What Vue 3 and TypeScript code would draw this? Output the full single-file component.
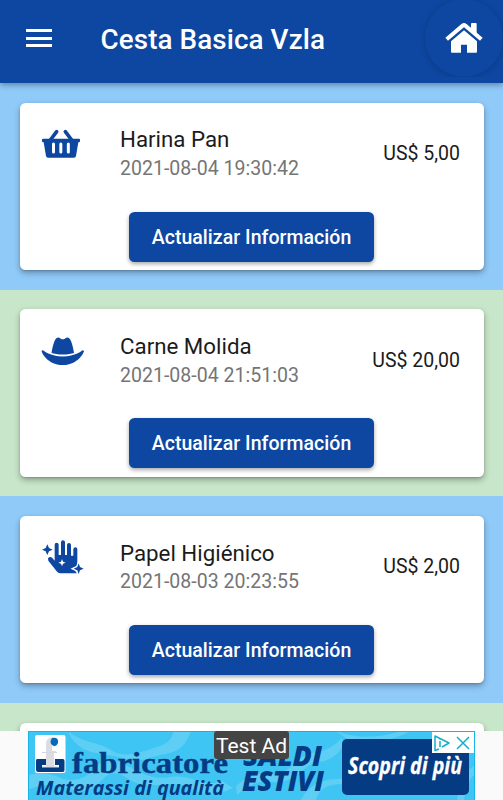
<script setup lang="ts">
interface Product {
  name: string
  date: string
  price: string
  icon: 'basket' | 'hat' | 'hand'
}

const products: Product[] = [
  { name: 'Harina Pan', date: '2021-08-04 19:30:42', price: 'US$ 5,00', icon: 'basket' },
  { name: 'Carne Molida', date: '2021-08-04 21:51:03', price: 'US$ 20,00', icon: 'hat' },
  { name: 'Papel Higiénico', date: '2021-08-03 20:23:55', price: 'US$ 2,00', icon: 'hand' },
]
</script>

<template>
  <div class="app">
    <header class="bar">
      <button class="menu" aria-label="Menu"><i></i><i></i><i></i></button>
      <h1>Cesta Basica Vzla</h1>
      <div class="home-clip">
        <button class="home" aria-label="Inicio">
          <svg viewBox="0 0 114 90" width="38" height="30">
            <path d="M78 3Q78 0 81 0H92Q95 0 95 3V38L78 24Z" fill="#fff" />
            <path d="M5 49L53 8Q57 5 61 8L109 49" fill="none" stroke="#fff" stroke-width="12" />
            <path d="M57 22L96 55V86Q96 89 93 89H66V65H48V89H21Q18 89 18 86V55Z" fill="#fff" />
          </svg>
        </button>
      </div>
    </header>

    <main class="list">
      <section v-for="p in products" :key="p.name" class="row">
        <article class="card">
          <div class="tile">
            <svg class="icon" viewBox="0 0 210 150">
              <g v-if="p.icon === 'basket'" transform="translate(0 5)">
                <path d="M61 61L80 36M125 61L106 36" fill="none" stroke="#0d47a1" stroke-width="11" stroke-linecap="round" />
                <path d="M39 57H147Q150 57 150 60V65Q150 68 146 68H145L138 109Q137 114 132 114H54Q49 114 48 109L41 68H40Q36 68 36 65V60Q36 57 39 57Z" fill="#0d47a1" />
                <path d="M70.500 73V97M92.500 73V97M115 73V97" stroke="#fff" stroke-width="9" stroke-linecap="round" />
              </g>
              <g v-else-if="p.icon === 'hat'" transform="translate(35 25) scale(.198)">
                <path fill="#0d47a1" d="M490 296.900C480.510 239.510 450.510 64 392.300 64c-14 0-26.490 5.930-37 14a58.210 58.210 0 0 1-70.580 0c-10.510-8-23-14-37-14-58.200 0-88.200 175.470-97.710 232.880C188.810 309.470 243.730 320 320 320s131.230-10.510 170-23.100zm142.900-37.180a16 16 0 0 0-19.750 1.500c-1 .9-101.270 90.780-293.160 90.780-190.820 0-292.220-89.940-293.240-90.840A16 16 0 0 0 1 278.530C1.730 280.550 78.320 480 320 480s318.270-199.450 319-201.470a16 16 0 0 0-6.090-18.810z" />
              </g>
              <g v-else transform="translate(0 -4)">
                <path fill="#0d47a1" d="M74 76V42Q74 36 80 36T86 42V73H93V35Q93 29 99 29T105 35V73H111V43Q111 37 117 37T123 43V75H130V56Q130 50 136 50T142 56V105L130 114L141 128H91Q84 128 80 122L55 90Q52 83 57 80Q62 77 67 82L74 90Z" />
                <path fill="#0d47a1" stroke="#fff" stroke-width="8" paint-order="stroke" d="M146 98L150 109L161 114L150 119L146 130L142 119L131 114L142 109Z" />
                <path fill="#0d47a1" d="M52 41L57 52L68 57L57 62L52 73L47 62L36 57L47 52Z" />
                <path fill="#fff" d="M96 85L99 93L107 96L99 99L96 107L93 99L85 96L93 93Z" />
              </g>
            </svg>
            <div class="text">
              <div class="name">{{ p.name }}</div>
              <div class="date">{{ p.date }}</div>
            </div>
            <div class="price">{{ p.price }}</div>
          </div>
          <button class="update">Actualizar Información</button>
        </article>
      </section>
      <section class="row"><article class="card"></article></section>
    </main>

    <footer class="ad">
      <svg viewBox="0 0 447 69" width="447" height="69">
        <rect width="447" height="69" fill="#3fc5f3" />
        <g fill="#74d5f6" opacity=".6">
          <path d="M40 0C54 12 68 10 83 19C96 29 116 20 132 15C143 11 144 5 146 0H163C158 14 151 21 137 23C120 26 112 33 94 27C78 22 62 24 51 15Q43 9 40 0Z" />
          <path d="M0 44Q18 39 35 48Q54 53 68 36Q78 26 91 31C109 39 121 50 143 46C164 43 176 57 194 50L205 57Q180 69 163 57C143 47 120 62 99 47Q85 37 75 48Q60 66 38 57Q18 50 0 59Z" />
          <path d="M208 55Q225 40 242 43C263 46 267 22 291 21Q305 17 314 7V17Q305 30 290 31C274 34 268 53 244 51Q226 48 209 64Z" />
          <path d="M273 69Q283 47 314 48V53Q292 53 288 69ZM308 0Q337 11 370 1L383 0Q352 16 319 8ZM429 69Q433 42 447 34V43Q438 50 436 69Z" />
        </g>
        <path d="M.5 69V.5H446.500V69" fill="none" stroke="#16b4e6" />
        <rect x="7" y="4" width="30.500" height="38" rx="2" fill="#fff" />
        <path d="M9 28H18V34H14V36H31V34H27V28H35Q36.500 28 36.500 30V39Q36.500 41 35 41H10Q8 41 8 39V30Q8 28 9 28Z" fill="#053b83" />
        <path d="M18 36V13Q18 6 26 6L24 12V20H28V22H26V36Z" fill="#dcdde2" />
        <path d="M14 21.500H29M14 36H31" stroke="#d5d7dd" stroke-width="1" />
        <path d="M24 7Q31 6 30 12Q28 17 24 14Q21 11 24 7Z" fill="#0869b5" />
        <g fill="#053b83">
          <text class="serif" x="44" y="42" font-size="30" stroke="#053b83" stroke-width=".4" textLength="156" lengthAdjust="spacingAndGlyphs">fabricatore</text>
          <text class="sans semi" x="8" y="64" font-size="19.500" textLength="188" lengthAdjust="spacingAndGlyphs">Materassi di qualità</text>
          <text class="sans" x="215" y="34.500" font-size="28" textLength="79" lengthAdjust="spacingAndGlyphs">SALDI</text>
          <text class="sans" x="214" y="60" font-size="28" textLength="82" lengthAdjust="spacingAndGlyphs">ESTIVI</text>
        </g>
        <rect x="314" y="8" width="127" height="56" rx="5" fill="#053b83" />
        <text class="sans semi" x="320" y="43" font-size="23" fill="#fff" stroke="#fff" stroke-width=".3" textLength="114" lengthAdjust="spacingAndGlyphs">Scopri di più</text>
        <rect x="404" y="1" width="42" height="21" fill="#fff" />
        <g fill="none" stroke="#12aecb" stroke-width="1.500">
          <path d="M411 18L407 19.500V5L421 12L414 16" stroke-linejoin="round" />
          <path d="M412 10V16M412 7V8.500" />
          <path d="M429 6L441 18M441 6L429 18" />
        </g>
      </svg>
      <span class="test">Test Ad</span>
    </footer>
  </div>
</template>

<style>
body { margin: 0; }
</style>

<style scoped>
.app {
  position: relative;
  width: 503px;
  height: 800px;
  overflow: hidden;
  display: flex;
  flex-direction: column;
  font-family: Roboto, sans-serif;
  background: #fafafa;
}
button { border: 0; padding: 0; font-family: inherit; }
.bar {
  position: relative;
  z-index: 1;
  flex: none;
  height: 83px;
  display: flex;
  background: #0d47a1;
  box-shadow: 0 2px 6px rgba(0, 0, 0, .35);
}
.menu {
  width: 26px;
  height: 18px;
  margin: 29px 0 0 26px;
  background: none;
  display: flex;
  flex-direction: column;
  justify-content: space-between;
}
.menu i { width: 26px; height: 3px; background: #fff; }
h1 {
  margin: 23px 0 0 48.500px;
  font-size: 27.800px;
  line-height: 34px;
  font-weight: 500;
  letter-spacing: .1px;
  color: #fff;
  white-space: nowrap;
}
.home-clip { height: 77px; width: 86px; margin-left: auto; overflow: hidden; }
.home {
  display: flex;
  align-items: center;
  justify-content: center;
  width: 78px;
  height: 78px;
  margin: -1px 0 0 8px;
  border-radius: 50%;
  background: #0d47a1;
  box-shadow: 0 1px 7px rgba(0, 0, 0, .18);
}
.list { flex: 1; min-height: 0; overflow: hidden; }
.row {
  box-sizing: border-box;
  height: 206.700px;
  padding: 19.500px 19.500px 0;
  background: #90caf9;
}
.row:nth-child(even) { background: #c8e6c9; }
.card {
  box-sizing: border-box;
  height: 167.500px;
  display: flex;
  flex-direction: column;
  align-items: center;
  border-radius: 5.500px;
  background: #fff;
  box-shadow: 0 3px 6px rgba(0, 0, 0, .3), 0 1px 2px rgba(0, 0, 0, .15);
}
.tile { display: flex; width: 100%; height: 109px; flex: none; }
.icon { width: 70px; height: 50px; margin: 15.800px 0 0 10.500px; flex: none; }
.text { margin: 22.800px 0 0 20px; white-space: nowrap; }
.name { font-size: 22.300px; line-height: 28px; color: #1b1b1b; }
.date { font-size: 19.500px; line-height: 28px; margin-top: 1.700px; letter-spacing: .02px; color: #757575; }
.price { margin: 37.400px 23.500px 0 auto; font-size: 19.500px; line-height: 28px; color: #1b1b1b; }
.update {
  width: 245px;
  height: 50px;
  border-radius: 5.500px;
  background: #0d47a1;
  color: #fff;
  font-size: 19.500px;
  line-height: 51px;
  font-weight: 500;
  letter-spacing: .04px;
  box-shadow: 0 2px 4px rgba(0, 0, 0, .35);
}
.ad {
  position: relative;
  flex: none;
  height: 69px;
  display: flex;
  justify-content: center;
  background: #fafafa;
}
.ad svg { display: block; }
.serif { font-family: "Liberation Serif", serif; font-weight: 700; }
.sans { font-family: "Open Sans", sans-serif; font-weight: 800; font-style: italic; }
.semi { font-weight: 700; }
.test {
  position: absolute;
  left: 214px;
  top: 0;
  width: 75px;
  height: 28px;
  border-radius: 3px;
  background: #444;
  color: #fff;
  font-size: 21px;
  line-height: 31px;
  text-align: center;
  white-space: nowrap;
}
</style>
